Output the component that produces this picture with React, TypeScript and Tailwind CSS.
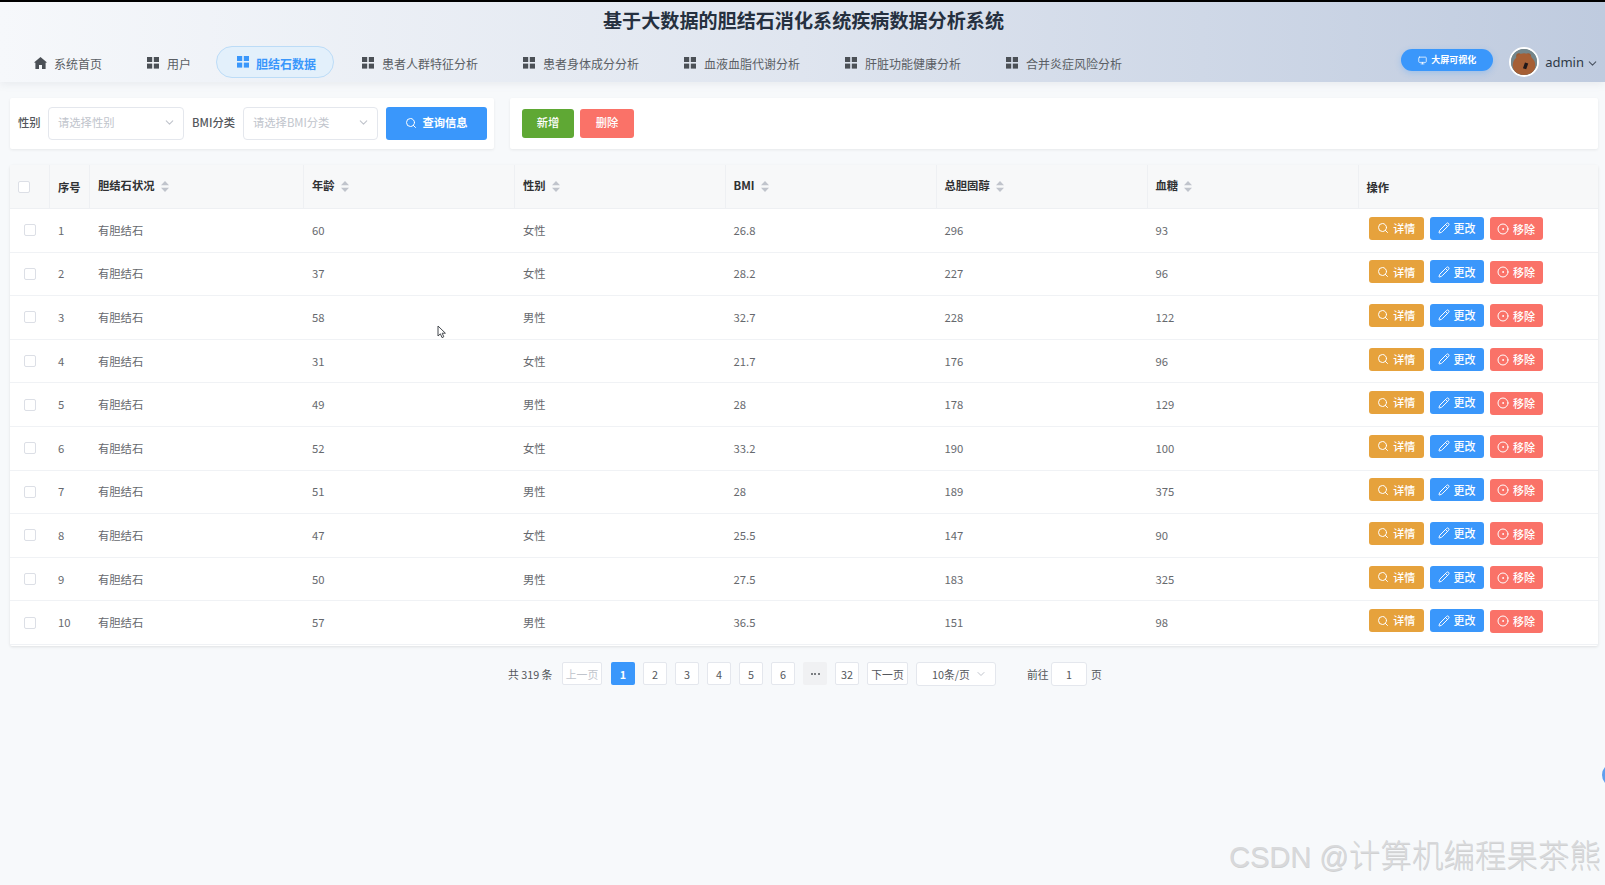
import React from "react";
import { Search, Pencil, CircleDot, ChevronDown, Monitor } from "lucide-react";

const Grid = ({ c }: { c: string }) => (
  <svg width="12" height="12" viewBox="0 0 12 12" fill={c} className="shrink-0">
    <rect x="0" y="0" width="5.2" height="5" />
    <rect x="6.8" y="0" width="5.2" height="5" />
    <rect x="0" y="6.6" width="5.2" height="5" />
    <rect x="6.8" y="6.6" width="5.2" height="5" />
  </svg>
);

const Home = () => (
  <svg width="13" height="12" viewBox="0 0 13 12" fill="#4b5056" className="shrink-0">
    <path d="M6.5 0 L13 5.6 L11.6 5.8 L11.6 12 L8 12 L8 8 L5 8 L5 12 L1.4 12 L1.4 5.8 L0 5.6 Z" />
  </svg>
);

const Sort = () => (
  <svg width="8" height="11" viewBox="0 0 8 11" fill="#c0c4cc" className="shrink-0">
    <path d="M4 0 L8 4.3 L0 4.3 Z" />
    <path d="M4 11 L8 6.7 L0 6.7 Z" />
  </svg>
);

const navs = ["用户", "胆结石数据", "患者人群特征分析", "患者身体成分分析", "血液血脂代谢分析", "肝脏功能健康分析", "合并炎症风险分析"];

const rows = [
  [1, 60, "女性", "26.8", 296, 93],
  [2, 37, "女性", "28.2", 227, 96],
  [3, 58, "男性", "32.7", 228, 122],
  [4, 31, "女性", "21.7", 176, 96],
  [5, 49, "男性", "28", 178, 129],
  [6, 52, "女性", "33.2", 190, 100],
  [7, 51, "男性", "28", 189, 375],
  [8, 47, "女性", "25.5", 147, 90],
  [9, 50, "男性", "27.5", 183, 325],
  [10, 57, "男性", "36.5", 151, 98],
];

const Head = ({ w, label, sort = true, last = false }: { w: string; label: string; sort?: boolean; last?: boolean }) => (
  <div className={`${w} h-full flex items-center gap-[6px] pl-2 border-r border-[#eef0f3] ${last ? "flex-1 border-r-0" : "shrink-0"}`}>
    <span className={`font-bold text-[#303133] ${sort ? "-mt-[2px]" : "mt-[1px]"}`}>{label}</span>
    {sort && <Sort />}
  </div>
);

const Cell = ({ w, children }: { w: string; children: React.ReactNode }) => (
  <div className={`${w} shrink-0 pl-2 text-[#66696e]`}>{children}</div>
);

const Pg = ({ children, active = false, w = "w-6" }: { children: React.ReactNode; active?: boolean; w?: string }) => (
  <div
    className={`${w} h-[23px] flex items-center justify-center rounded-[2px] text-[10.8px] shrink-0 ${
      active ? "bg-[#3a97fb] text-white font-bold" : "bg-white border border-[#e4e7ed] text-[#54575c]"
    }`}
  >
    {children}
  </div>
);

export default function App() {
  return (
    <div
      className="relative w-[1605px] h-[885px] overflow-hidden bg-[#f7f9fb] text-[11.3px]"
      style={{ fontFamily: '"Noto Sans CJK SC", "Noto Sans", sans-serif' }}
    >
      {/* header */}
      <header className="h-[82px] border-t-2 border-black bg-gradient-to-r from-[#f6f8fb] via-[#dfe5ef] to-[#bfcbdf] shadow-[0_2px_8px_rgba(120,130,150,0.12)] flex flex-col">
        <h1 className="h-[40px] pt-[2px] text-center text-[19.1px] leading-[32px] font-bold text-[#25303f] pl-[2px]">
          基于大数据的胆结石消化系统疾病数据分析系统
        </h1>
        <div className="flex items-start pl-[14px] pt-[4px] pr-[6px] text-[12px]">
          <nav className="flex gap-[5px] h-[32px]">
            <div className="flex items-center gap-[7px] pl-5 pr-5 text-[#5a5e64] pt-[1px]">
              <Home />
              <span className="mt-[2px]">系统首页</span>
            </div>
            {navs.map((n, i) =>
              i === 1 ? (
                <div
                  key={n}
                  className="flex items-center gap-[7px] px-5 mr-[3px] rounded-full border border-[#bcdcf7] bg-[#e3f0fb] text-[#3a97fb] font-bold w-[118px]"
                >
                  <Grid c="#3a97fb" />
                  <span className="whitespace-nowrap mt-[3px]">{n}</span>
                </div>
              ) : (
                <div key={n} className="flex items-center gap-[8px] px-5 text-[#5a5e64] pt-[1px]">
                  <Grid c="#4b5056" />
                  <span className="whitespace-nowrap mt-[2px]">{n}</span>
                </div>
              )
            )}
          </nav>
          <div className="ml-auto flex items-center mt-[3px]">
            <div className="w-[92px] h-[22px] mt-[-6px] rounded-full bg-[#3a97fb] text-white text-[9px] font-bold flex items-center justify-center gap-[4px] shadow-[0_2px_6px_rgba(58,151,251,0.3)]">
              <Monitor size={9} />
              大屏可视化
            </div>
            <div className="ml-4 w-[30px] h-[30px] rounded-full border-2 border-white overflow-hidden bg-[#6d7f86] mt-[-2px]">
              <svg viewBox="0 0 30 30" width="26" height="26">
                <rect width="30" height="30" fill="#74868b" />
                <ellipse cx="15" cy="19" rx="13" ry="12" fill="#a65f35" />
                <circle cx="9" cy="8" r="3" fill="#9c5a32" />
                <circle cx="20" cy="8" r="3" fill="#9c5a32" />
                <ellipse cx="15" cy="11" rx="9" ry="6" fill="#a65f35" />
                <rect x="15" y="16" width="4" height="7" fill="#20181a" transform="rotate(20 17 19)" />
              </svg>
            </div>
            <span className="ml-[6px] text-[13px] text-[#2f3946] -mt-[1px]" style={{ fontFamily: '"Noto Sans", sans-serif' }}>
              admin
            </span>
            <ChevronDown size={13} className="ml-[2px] text-[#4b5563]" />
          </div>
        </div>
      </header>

      {/* toolbar */}
      <div className="flex gap-4 pl-[10px] pr-[7px] pt-[16px]">
        <div className="w-[484px] h-[51px] bg-white rounded-[2px] shadow-[0_1px_3px_rgba(0,0,0,0.07)] flex items-center pl-[8px] shrink-0">
          <span className="font-medium text-[#54575c] w-[30px] -mt-[2px]">性别</span>
          <div className="w-[136px] h-[33px] border border-[#e4e7ed] rounded-[4px] flex items-center justify-between pl-[9px] pr-[7px] pb-[2px] text-[#c0c4cc]">
            请选择性别
            <ChevronDown size={13} />
          </div>
          <span className="ml-2 font-medium text-[#54575c] w-[51px] -mt-[2px]">BMI分类</span>
          <div className="w-[135px] h-[33px] border border-[#e4e7ed] rounded-[4px] flex items-center justify-between pl-[9px] pr-[7px] pb-[2px] text-[#c0c4cc]">
            请选择BMI分类
            <ChevronDown size={13} />
          </div>
          <div className="ml-2 w-[101px] h-[33px] rounded-[3px] bg-[#3a97fb] text-white font-bold flex items-center justify-center gap-[5px] pb-[2px]">
            <Search size={12} />
            查询信息
          </div>
        </div>
        <div className="flex-1 h-[51px] bg-white rounded-[2px] shadow-[0_1px_3px_rgba(0,0,0,0.07)] flex items-center pl-3 gap-[6px]">
          <div className="w-[52px] h-[29px] rounded-[3px] bg-[#5fa834] text-white font-medium flex items-center justify-center pb-[2px]">新增</div>
          <div className="w-[54px] h-[29px] rounded-[3px] bg-[#fa7268] text-white font-medium flex items-center justify-center pb-[2px]">删除</div>
        </div>
      </div>

      {/* table */}
      <div className="ml-[10px] mr-[7px] mt-[16px] pb-[1px] bg-white rounded-[2px] shadow-[0_1px_3px_rgba(0,0,0,0.1)]">
        <div className="h-[44px] flex items-center bg-[#f7f8f9] border-b border-[#eef0f3]">
          <div className="w-[40px] shrink-0 h-full flex items-center justify-center pr-[12px] border-r border-[#eef0f3]">
            <div className="w-[12px] h-[12px] bg-white border border-[#dcdfe6] rounded-[2px]" />
          </div>
          <Head w="w-[40px]" label="序号" sort={false} />
          <Head w="w-[214px]" label="胆结石状况" />
          <Head w="w-[211px]" label="年龄" />
          <Head w="w-[210.5px]" label="性别" />
          <Head w="w-[211px]" label="BMI" />
          <Head w="w-[211px]" label="总胆固醇" />
          <Head w="w-[211px]" label="血糖" />
          <Head w="w-auto" label="操作" sort={false} last />
        </div>
        {rows.map((r) => (
          <div key={r[0]} className="h-[43.6px] flex items-center border-b border-[#f0f2f5]">
            <div className="w-[40px] shrink-0 flex justify-center">
              <div className="w-[12px] h-[12px] bg-white border border-[#dcdfe6] rounded-[2px]" />
            </div>
            <Cell w="w-[40px]">{r[0]}</Cell>
            <Cell w="w-[214px]">有胆结石</Cell>
            <Cell w="w-[211px]">{r[1]}</Cell>
            <Cell w="w-[210.5px]">{r[2]}</Cell>
            <Cell w="w-[211px]">{r[3]}</Cell>
            <Cell w="w-[211px]">{r[4]}</Cell>
            <Cell w="w-[211px]">{r[5]}</Cell>
            <div className="flex-1 flex items-center pl-[10.5px] gap-[6px] -mt-[4px] text-[11px] font-medium text-white">
              <div className="w-[54.5px] h-[23px] rounded-[3px] bg-[#e6a23c] flex items-center justify-center gap-[4px]">
                <Search size={12} />
                详情
              </div>
              <div className="w-[54px] h-[23px] rounded-[3px] bg-[#3a97fb] flex items-center justify-center gap-[4px]">
                <Pencil size={12} />
                更改
              </div>
              <div className="w-[53px] h-[23px] rounded-[3px] bg-[#fa7268] flex items-center justify-center gap-[4px] mt-[1px]">
                <CircleDot size={12} />
                移除
              </div>
            </div>
          </div>
        ))}
      </div>

      {/* pagination */}
      <div className="flex items-center mt-[16px] pl-[508px] text-[10.8px] text-[#54575c]">
        <span className="w-[54px] whitespace-nowrap">共 319 条</span>
        <div className="w-[40px] h-[23px] flex items-center justify-center bg-white border border-[#e4e7ed] rounded-[2px] text-[#c0c4cc] shrink-0">上一页</div>
        <div className="flex gap-[8px] ml-[9px]">
          <Pg active>1</Pg>
          <Pg>2</Pg>
          <Pg>3</Pg>
          <Pg>4</Pg>
          <Pg>5</Pg>
          <Pg>6</Pg>
          <div className="w-6 h-[23px] flex items-center justify-center gap-[1.5px] bg-[#f0f1f3] rounded-[2px]">
            <span className="w-[2px] h-[2px] rounded-full bg-[#54575c]" />
            <span className="w-[2px] h-[2px] rounded-full bg-[#54575c]" />
            <span className="w-[2px] h-[2px] rounded-full bg-[#54575c]" />
          </div>
          <Pg>32</Pg>
          <Pg w="w-[41px]">下一页</Pg>
        </div>
        <div className="ml-[8px] w-[80px] h-[24px] bg-white border border-[#e4e7ed] rounded-[3px] flex items-center justify-between pl-[15px] pr-[8px] shrink-0">
          10条/页
          <ChevronDown size={12} className="text-[#c0c4cc]" />
        </div>
        <span className="ml-[31px] w-[24px] whitespace-nowrap">前往</span>
        <div className="w-[36px] h-[24px] bg-white border border-[#e4e7ed] rounded-[3px] flex items-center justify-center">1</div>
        <span className="ml-[4px]">页</span>
      </div>

      {/* overlays */}
      <svg width="10" height="14" viewBox="0 0 10 14" className="absolute left-[437px] top-[325px]">
        <path d="M1 1 L1 11 L3.4 8.8 L5 12.6 L6.8 11.8 L5.2 8.2 L8.4 8.2 Z" fill="#fff" stroke="#44484e" strokeWidth="1" />
      </svg>
      <div className="absolute left-[1602px] top-[763px] w-6 h-6 rounded-full bg-[#5f9fee]" />
      <div
        className="absolute left-[1229px] top-[836px] text-[29px] leading-[40px] font-light whitespace-nowrap text-[#d8d9db] [text-shadow:0.5px_0.5px_0_rgba(170,170,170,0.5)]"
        style={{ fontFamily: '"Liberation Sans", "Noto Sans CJK SC", sans-serif' }}
      >
        CSDN @<span className="text-[31.5px]">计算机编程果茶熊</span>
      </div>
    </div>
  );
}
